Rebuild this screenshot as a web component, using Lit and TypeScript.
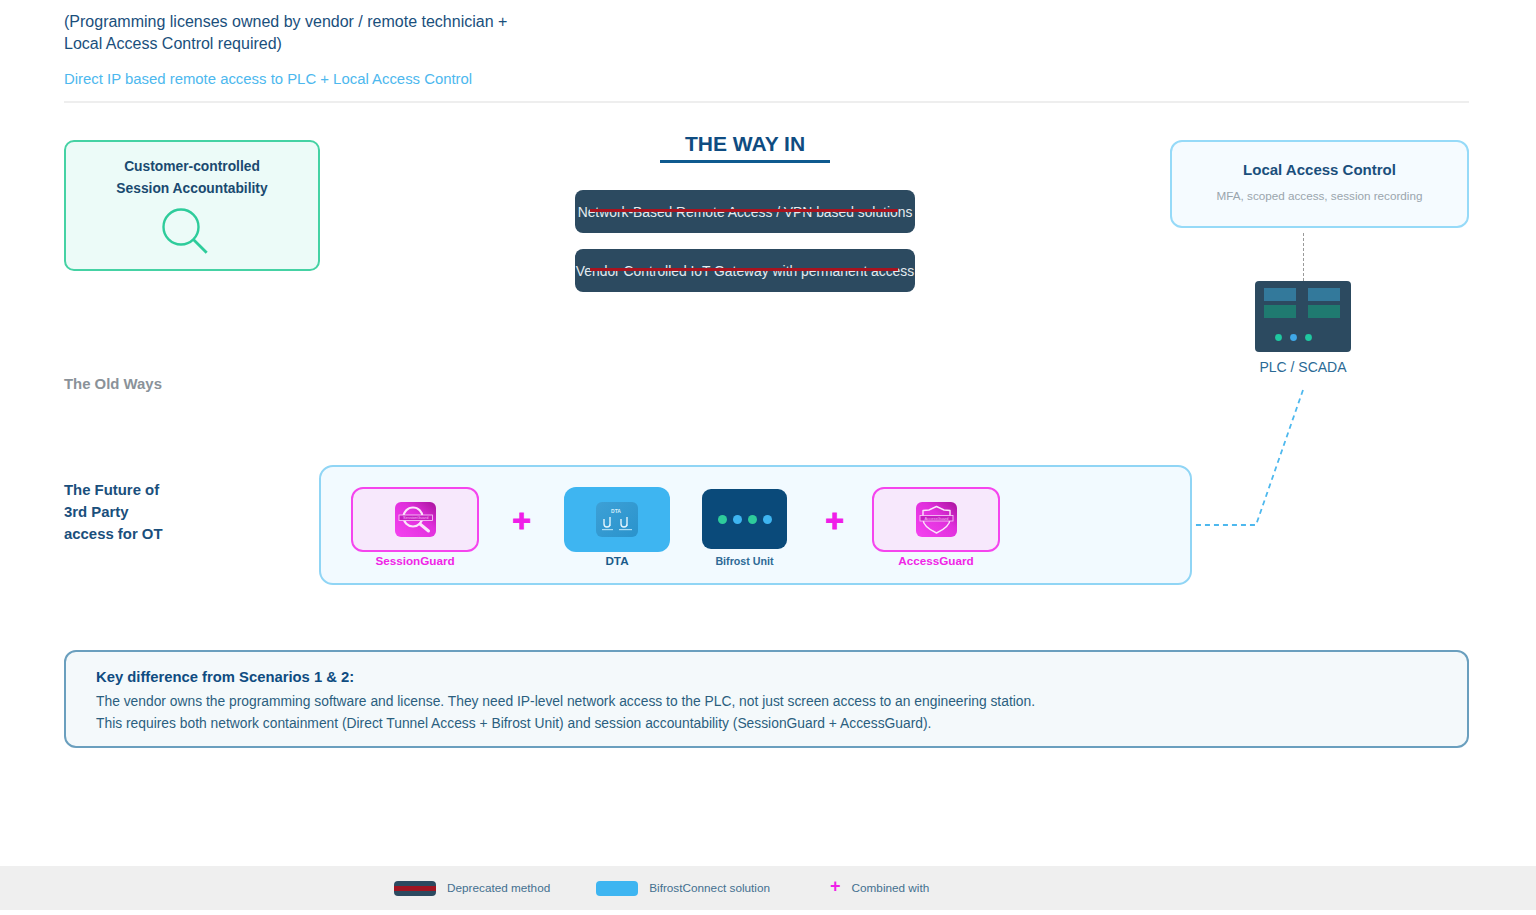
import { LitElement, html, css } from "lit";
import { customElement } from "lit/decorators.js";

const sessionIcon = html`<svg class="icon" viewBox="0 0 41 35" width="41" height="35">
  <defs><linearGradient id="g1" x1="0" y1="1" x2="1" y2="0"><stop offset="0" stop-color="#f544f0"/><stop offset="0.6" stop-color="#e02fdc"/><stop offset="1" stop-color="#a8129c"/></linearGradient></defs>
  <rect width="41" height="35" rx="6" fill="url(#g1)"/>
  <circle cx="18" cy="15" r="9.5" fill="none" stroke="#fbe6fb" stroke-width="2.2"/>
  <line x1="25" y1="22" x2="33.5" y2="29" stroke="#fbe6fb" stroke-width="3" stroke-linecap="round"/>
  <rect x="4" y="13" width="33.5" height="5.5" fill="#c520c0" stroke="#fbd4fb" stroke-width="0.8"/>
  <text x="20.7" y="17" font-size="4" text-anchor="middle" fill="#f7b8f5" font-family="Liberation Sans, sans-serif">SessionGuard</text>
</svg>`;

const accessIcon = html`<svg class="icon" viewBox="0 0 41 35" width="41" height="35">
  <defs><linearGradient id="g2" x1="0" y1="1" x2="1" y2="0"><stop offset="0" stop-color="#f544f0"/><stop offset="0.6" stop-color="#e02fdc"/><stop offset="1" stop-color="#a8129c"/></linearGradient></defs>
  <rect width="41" height="35" rx="6" fill="url(#g2)"/>
  <path d="M20.5 4.5 L28 8 L34 8.5 V17 C34 23 27 28 20.5 31 C14 28 7 23 7 17 V8.5 L13 8 Z" fill="none" stroke="#fbe6fb" stroke-width="1.4" stroke-linejoin="round"/>
  <rect x="4" y="13.5" width="33" height="5.5" fill="#c520c0" stroke="#fbd4fb" stroke-width="0.8"/>
  <text x="20.5" y="17.6" font-size="4" text-anchor="middle" fill="#f7b8f5" font-family="Liberation Sans, sans-serif">AccessGuard</text>
</svg>`;

const dtaIcon = html`<svg class="icon" viewBox="0 0 42 35" width="42" height="35">
  <defs><linearGradient id="g3" x1="0" y1="0" x2="1" y2="1"><stop offset="0" stop-color="#3da0d6"/><stop offset="1" stop-color="#2a93cc"/></linearGradient></defs>
  <rect width="42" height="35" rx="6" fill="url(#g3)"/>
  <text x="20" y="11" font-size="5" font-weight="700" text-anchor="middle" fill="#d5effc" font-family="Liberation Sans, sans-serif">DTA</text>
  <path d="M8 17 V22 A3 3 0 0 0 14 22 M14 15 V24" fill="none" stroke="#e2f4fd" stroke-width="1.4"/>
  <path d="M25 17 V22 A3 3 0 0 0 31 22 M31 15 V24" fill="none" stroke="#e2f4fd" stroke-width="1.4"/>
  <rect x="6" y="27" width="11" height="1.2" fill="#a9dcf5"/>
  <rect x="23" y="27" width="13" height="1.2" fill="#a9dcf5"/>
</svg>`;

@customElement("app-root")
export class AppRoot extends LitElement {
  static styles = css`
    :host { display: block; font-family: "Liberation Sans", Arial, sans-serif; background: #fff; color: #1a4f7c; }
    .page { height: 915px; overflow: hidden; display: flex; flex-direction: column; }
    .main { padding: 11px 67px 0 64px; display: flex; flex-direction: column; }
    .head { font-size: 16px; line-height: 22px; color: #1a4f7c; }
    .sub { font-size: 14.9px; line-height: 22px; color: #4db8ee; margin-top: 13px; }
    .rule { height: 2px; background: #eeeeee; margin-top: 11px; }

    .top { display: grid; grid-template-columns: 256px 1fr 299px; min-height: 263px; margin-top: 27px; }
    .left { display: flex; flex-direction: column; padding-top: 10px; }
    .cust { box-sizing: border-box; height: 131px; border: 2px solid #45d2a4; border-radius: 10px; background: #ecfbf8; padding-top: 14px; text-align: center; font-size: 13.8px; font-weight: 700; line-height: 21.5px; color: #1a4a70; }
    .mag { display: block; margin: 7px auto 0; }
    .old { margin-top: auto; font-size: 14.9px; font-weight: 700; line-height: 18px; color: #8a9299; }

    .center { display: flex; flex-direction: column; align-items: center; }
    .way { box-sizing: content-box; width: 170px; text-align: center; font-size: 21px; line-height: 28px; font-weight: 700; color: #0f4c81; padding-bottom: 2px; border-bottom: 3px solid #0f5a8f; margin-bottom: 27px; }
    .dep { position: relative; box-sizing: border-box; width: 340px; height: 43px; margin-bottom: 16px; background: #2c4a60; border-radius: 8px; color: #e4ebef; font-size: 13.85px; display: flex; align-items: center; justify-content: center; white-space: nowrap; }
    .strike { position: absolute; left: 15px; right: 17px; top: 19px; height: 3px; background: #a8131f; }

    .right { display: flex; flex-direction: column; padding-top: 10px; }
    .lac { box-sizing: border-box; height: 88px; border: 2px solid #96daf8; border-radius: 12px; background: #f5fbff; padding-top: 17px; text-align: center; }
    .lac-t { font-size: 15px; font-weight: 700; line-height: 22px; color: #1a4f7c; }
    .lac-s { font-size: 11.7px; line-height: 16px; color: #9aa5ad; margin-top: 7px; }
    .plc { width: 96px; margin-left: 85px; display: flex; flex-direction: column; align-items: center; }
    .vdash { height: 48px; margin-top: 5px; border-left: 1px dashed #9a9a9a; }
    .plc svg { display: block; }
    .plc-l { margin-top: 6px; font-size: 14px; line-height: 18px; color: #2a6a95; white-space: nowrap; }

    .future { position: relative; display: grid; grid-template-columns: 255px 873px; margin-top: 72px; height: 120px; }
    .fut-l { margin-top: 14px; font-size: 14.9px; font-weight: 700; line-height: 22px; color: #1a4f7c; }
    .panel { box-sizing: border-box; height: 120px; border: 2px solid #90d5f5; border-radius: 14px; background: #f2faff; padding: 20px 0 0 30px; display: flex; gap: 32px; align-items: flex-start; }
    .item { display: flex; flex-direction: column; align-items: center; }
    .slot { height: 65px; display: flex; align-items: flex-start; padding-top: 2px; box-sizing: border-box; }
    .lbl { margin-top: 2px; font-size: 11.7px; line-height: 14px; font-weight: 700; color: #1a5a8a; white-space: nowrap; }
    .lbl.mag-c { color: #f025e6; }
    .lbl.soft { color: #2e6a96; font-size: 10.7px; }
    .guard { box-sizing: border-box; width: 128px; height: 65px; border: 2px solid #f545ee; border-radius: 12px; background: #f7e8fc; display: flex; align-items: center; justify-content: center; }
    .dta { width: 106px; height: 65px; border-radius: 12px; background: #3eb5f1; display: flex; align-items: center; justify-content: center; }
    .bif { width: 85px; height: 60px; border-radius: 9px; background: #0a4a7a; display: flex; align-items: center; justify-content: center; gap: 6px; }
    .dot { width: 9px; height: 9px; border-radius: 50%; }
    .g { background: #2ecc9b; }
    .b { background: #3eb5f1; }
    .plus { width: 21px; height: 65px; display: flex; align-items: center; justify-content: center; color: #f01ee8; font-size: 32px; font-weight: 700; line-height: 1; padding-top: 1px; box-sizing: border-box; -webkit-text-stroke: 1px #f01ee8; }
    .plus.shift { margin: 0 -5px 0 5px; }
    .link { position: absolute; left: 1128px; top: -75px; overflow: visible; }

    .key { box-sizing: border-box; height: 98px; margin-top: 65px; border: 2px solid #6a9fbe; border-radius: 12px; background: #f4f9fb; padding: 14px 30px; }
    .key-t { font-size: 14.8px; font-weight: 700; line-height: 22px; color: #0f4c81; margin-bottom: 2px; }
    .key-p { font-size: 13.83px; line-height: 22px; color: #2b5f7f; }

    .legend { box-sizing: border-box; height: 44px; margin-top: 118px; background: #efefef; padding-left: 394px; display: flex; align-items: center; font-size: 11.75px; color: #44708f; }
    .legend .t { margin-bottom: 2px; }
    .swatch { width: 42px; height: 15px; border-radius: 4px; margin-right: 11px; }
    .sw-dep { background: linear-gradient(#2c4a60 0 35%, #a01522 35% 65%, #2c4a60 65%); }
    .sw-blue { background: #3eb5f1; margin-left: 46px; }
    .leg-plus { margin: -4px 11px 0 60px; color: #f01ee8; font-size: 18px; font-weight: 700; line-height: 1; }
  `;

  render() {
    return html`<div class="page">
      <div class="main">
        <div class="head">(Programming licenses owned by vendor / remote technician +<br />Local Access Control required)</div>
        <div class="sub">Direct IP based remote access to PLC + Local Access Control</div>
        <div class="rule"></div>

        <div class="top">
          <div class="left">
            <div class="cust">
              Customer-controlled<br />Session Accountability
              <svg class="mag" width="64" height="50" viewBox="0 0 64 50">
                <circle cx="21" cy="21" r="17.5" fill="none" stroke="#2ecc9b" stroke-width="2.4"/>
                <line x1="33.4" y1="33.4" x2="46.7" y2="46.7" stroke="#2ecc9b" stroke-width="2.8"/>
              </svg>
            </div>
            <div class="old">The Old Ways</div>
          </div>
          <div class="center">
            <div class="way">THE WAY IN</div>
            <div class="dep">Network-Based Remote Access / VPN based solutions<span class="strike"></span></div>
            <div class="dep">Vendor Controlled IoT Gateway with permanent access<span class="strike"></span></div>
          </div>
          <div class="right">
            <div class="lac">
              <div class="lac-t">Local Access Control</div>
              <div class="lac-s">MFA, scoped access, session recording</div>
            </div>
            <div class="plc">
              <div class="vdash"></div>
              <svg width="96" height="71" viewBox="0 0 96 71">
                <rect width="96" height="71" rx="4" fill="#2c4a60"/>
                <rect x="9" y="7" width="32" height="13" fill="#33799b"/>
                <rect x="53" y="7" width="32" height="13" fill="#33799b"/>
                <rect x="9" y="24" width="32" height="13" fill="#1f7a70"/>
                <rect x="53" y="24" width="32" height="13" fill="#1f7a70"/>
                <circle cx="23.5" cy="56.5" r="3.4" fill="#1fc8a0"/>
                <circle cx="38.5" cy="56.5" r="3.4" fill="#3fa8e8"/>
                <circle cx="53.5" cy="56.5" r="3.4" fill="#1fc8a0"/>
              </svg>
              <div class="plc-l">PLC / SCADA</div>
            </div>
          </div>
        </div>

        <div class="future">
          <div class="fut-l">The Future of<br />3rd Party<br />access for OT</div>
          <div class="panel">
            <div class="item"><div class="guard">${sessionIcon}</div><div class="lbl mag-c">SessionGuard</div></div>
            <div class="plus">+</div>
            <div class="item"><div class="dta">${dtaIcon}</div><div class="lbl">DTA</div></div>
            <div class="item"><div class="slot"><div class="bif"><span class="dot g"></span><span class="dot b"></span><span class="dot g"></span><span class="dot b"></span></div></div><div class="lbl soft">Bifrost Unit</div></div>
            <div class="plus shift">+</div>
            <div class="item"><div class="guard">${accessIcon}</div><div class="lbl mag-c">AccessGuard</div></div>
          </div>
          <svg class="link" width="111" height="135" viewBox="0 0 111 135">
            <path d="M111 0 L64 135 H0" fill="none" stroke="#4db8ee" stroke-width="1.8" stroke-dasharray="5 4"/>
          </svg>
        </div>

        <div class="key">
          <div class="key-t">Key difference from Scenarios 1 &amp; 2:</div>
          <div class="key-p">The vendor owns the programming software and license. They need IP-level network access to the PLC, not just screen access to an engineering station.</div>
          <div class="key-p">This requires both network containment (Direct Tunnel Access + Bifrost Unit) and session accountability (SessionGuard + AccessGuard).</div>
        </div>
      </div>
      <div class="legend">
        <span class="swatch sw-dep"></span><span class="t">Deprecated method</span>
        <span class="swatch sw-blue"></span><span class="t">BifrostConnect solution</span>
        <span class="leg-plus">+</span><span class="t">Combined with</span>
      </div>
    </div>`;
  }
}
